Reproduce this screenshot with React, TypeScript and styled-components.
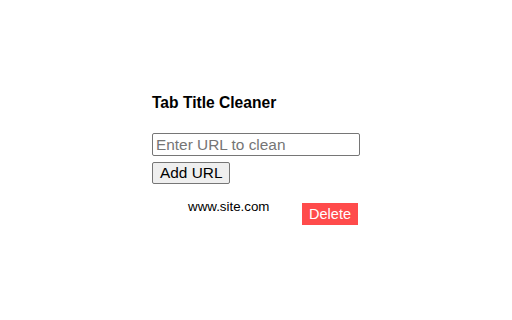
import styled, { createGlobalStyle } from 'styled-components';

const GlobalStyle = createGlobalStyle`
  body {
    margin: 0;
    background: #ffffff;
    font-family: "Liberation Sans", Arial, sans-serif;
    color: #000000;
  }
`;

const Popup = styled.div`
  width: 208px;
  margin: 0 auto;
  padding-top: 94px;
  display: flex;
  flex-direction: column;
  align-items: flex-start;
`;

const Title = styled.h3`
  margin: 0;
  font-size: 15.6px;
  line-height: 18px;
  font-weight: bold;
`;

const UrlInput = styled.input`
  box-sizing: border-box;
  width: 208px;
  height: 23px;
  margin: 21px 0 0 0;
  padding: 0 3px;
  border: 1px solid #767676;
  border-radius: 2px;
  font-family: inherit;
  font-size: 15.4px;
  color: #000;
  &::placeholder {
    color: #757575;
  }
`;

const AddButton = styled.button`
  box-sizing: border-box;
  height: 22px;
  margin-top: 6px;
  padding: 0 7px;
  border: 1px solid #767676;
  border-radius: 2px;
  background: #efefef;
  font-family: inherit;
  font-size: 15.4px;
  line-height: 18px;
  color: #000;
`;

const UrlList = styled.ul`
  list-style: none;
  width: 208px;
  box-sizing: border-box;
  margin: 15px 0 0 0;
  padding: 0 2px 0 36px;
`;

const UrlRow = styled.li`
  display: flex;
  justify-content: space-between;
  align-items: flex-start;
  font-size: 13.33px;
  line-height: 15px;
`;

const DeleteButton = styled.button`
  box-sizing: border-box;
  height: 22px;
  margin-top: 4px;
  padding: 0 7px;
  border: none;
  background: #ff4b4b;
  color: #ffffff;
  font-family: inherit;
  font-size: 14.5px;
  line-height: 22px;
`;

const urls = ['www.site.com'];

const App = () => {
  return (
    <>
      <GlobalStyle />
      <Popup>
        <Title>Tab Title Cleaner</Title>
        <UrlInput type="text" placeholder="Enter URL to clean" />
        <AddButton>Add URL</AddButton>
        <UrlList>
          {urls.map((url) => (
            <UrlRow key={url}>
              <span>{url}</span>
              <DeleteButton>Delete</DeleteButton>
            </UrlRow>
          ))}
        </UrlList>
      </Popup>
    </>
  );
};

export default App;
